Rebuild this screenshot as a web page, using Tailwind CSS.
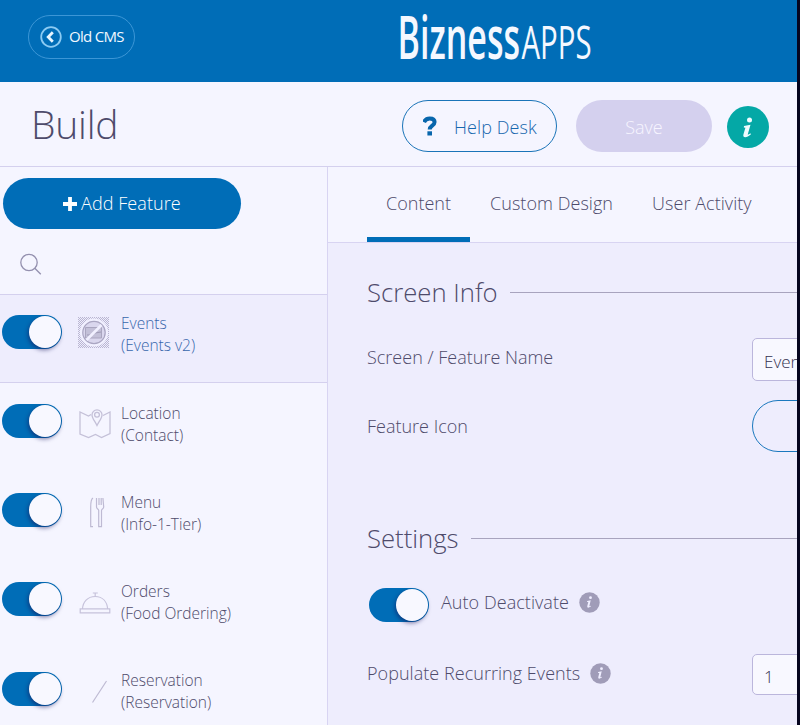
<!DOCTYPE html>
<html lang="en">
<head>
  <meta charset="UTF-8">
  <meta name="viewport" content="width=device-width, initial-scale=1.0">
  <title>Build - Bizness Apps</title>
  <script src="https://cdn.jsdelivr.net/npm/@tailwindcss/browser@4"></script>
</head>
<body class="h-[725px] w-[800px] overflow-hidden bg-[#06051f] font-['Open_Sans',sans-serif] font-light text-[#4e4b6b]">
  <div class="flex h-[725px] w-[797px] flex-col overflow-hidden bg-[#f5f5ff]">
    <header class="flex h-[82px] shrink-0 items-start bg-[#006db7]">
      <button class="mt-[15px] ml-7 flex h-11 w-[107px] items-center rounded-full border border-[#3c96d6] pl-[11px] text-white">
        <svg class="size-[22px] shrink-0" viewBox="0 0 22 22" fill="none">
          <circle cx="11" cy="11" r="9.8" stroke="#8ccbf3" stroke-width="1.8"/>
          <path d="M12.8 6.2 8.2 11l4.6 4.8" stroke="#e6f5ff" stroke-width="2.8"/>
        </svg>
        <span class="ml-[7px] pb-px text-[15px] font-normal tracking-[-0.7px] whitespace-nowrap text-[#f2f8ff]">Old CMS</span>
      </button>
      <svg class="ml-[263px] h-[82px] w-[220px] overflow-visible" viewBox="0 0 220 82" fill="#f4f8ff">
        <text x="-0.5" y="58.5" font-size="60" font-weight="600" textLength="122.5" lengthAdjust="spacingAndGlyphs">Bizness</text>
        <text x="123.5" y="58.5" font-size="46" font-weight="500" textLength="70" lengthAdjust="spacingAndGlyphs">APPS</text>
      </svg>
    </header>

    <section class="flex h-[85px] shrink-0 items-start border-b border-[#d4d0ee]">
      <h1 class="mt-3 ml-[31px] w-[371px] text-[39px] leading-[60px] tracking-[-0.2px]">Build</h1>
      <button class="mt-[18px] flex h-[52px] w-[155px] items-center rounded-full border-[1.5px] border-[#1a74b8] pl-5 text-[18px] text-[#1767ae]">
        <svg class="h-5 w-[14px]" viewBox="0 0 14 20" fill="none" stroke="#0866ac" stroke-width="4">
          <path d="M1 6.2C2 3.6 4 2.4 6.7 2.4c3 0 4.9 1.3 4.9 3.6 0 3.8-4.9 3.5-4.9 7.5"/>
          <path d="M6.7 15.3v4.2" stroke-width="4.6"/>
        </svg>
        <span class="ml-[17px] pt-0.5 tracking-[0.08px] whitespace-nowrap">Help Desk</span>
      </button>
      <button class="mt-[18px] ml-[19px] h-[52px] w-[136px] rounded-full bg-[#d4d0ee] pt-0.5 text-[18px] text-[#f7f5ff]">Save</button>
      <div class="mt-6 ml-[15px] size-[42px] rounded-full bg-[#04a8a6]">
        <svg class="size-[42px]" viewBox="0 0 42 42" fill="#eefcff">
          <circle cx="22.5" cy="14" r="2.5"/>
          <path d="m17 20.1 6.5-1.4-2.7 9.5c-.2.8.4.7 2.5-.9l.7.9c-2.3 2.1-4.1 3-5.8 3-1.6 0-2.2-1-1.8-2.6l2-6.9-1.6-.3z"/>
        </svg>
      </div>
    </section>

    <div class="flex min-h-0 flex-1">
      <aside class="w-[328px] shrink-0 border-r border-[#d8d4f2]">
        <button class="mt-[11px] ml-[3px] flex h-[51px] w-[238px] items-center rounded-full bg-[#006db7] pl-[60px] text-[18px] text-white">
          <svg class="size-[14px]" viewBox="0 0 14 14"><path d="M7 0v14M0 7h14" stroke="#fff" stroke-width="3.8"/></svg>
          <span class="ml-1 tracking-[0.08px]">Add Feature</span>
        </button>
        <div class="h-[65px] pt-6 pl-5">
          <svg class="size-[22px]" viewBox="0 0 22 22" fill="none" stroke="#9490af" stroke-width="1.3">
            <circle cx="9" cy="9.5" r="8.2"/>
            <path d="m14.8 15.3 6 6"/>
          </svg>
        </div>

        <ul class="text-[15.5px] leading-[22px]">
          <li class="flex h-[89px] items-start border-y border-[#d4d0ee] bg-[#eeedfd] text-[#3766ac]">
            <div class="mt-5 ml-[2px] flex h-[34px] w-[60px] justify-end rounded-full bg-[#006db7] p-px">
              <span class="size-8 rounded-full bg-[#f8f8ff] shadow-[-1px_2px_4px_rgba(20,20,90,0.55)]"></span>
            </div>
            <svg class="mt-[22px] ml-4 size-[31px]" viewBox="0 0 31 31" fill="none">
              <defs>
                <pattern id="checks" width="2" height="2" patternUnits="userSpaceOnUse">
                  <path d="M0 0h1v1H0zM1 1h1v1H1z" fill="#bab6d2"/>
                </pattern>
              </defs>
              <path d="M0 0h31v31H0z" fill="url(#checks)"/>
              <circle cx="16" cy="15.5" r="12.8" fill="#dad7ee" stroke="#f1f0ff" stroke-width="2.5"/>
              <circle cx="16" cy="15.5" r="11.2" stroke="#aaa6c2" stroke-width="1.2"/>
              <path d="M7.5 10.5h16V21h-16z" fill="#c3c0d8" stroke="#aaa6c0"/>
              <path d="M9 18h5l3-2 6-1" stroke="#9d99b5"/>
              <path d="M8.5 23 23.5 8" stroke="#f1f0ff" stroke-width="2.6"/>
            </svg>
            <div class="mt-[17px] ml-3">Events<br>(Events v2)</div>
          </li>
          <li class="flex h-[89px] items-start">
            <div class="mt-[21px] ml-[2px] flex h-[34px] w-[60px] justify-end rounded-full bg-[#006db7] p-px">
              <span class="size-8 rounded-full bg-[#f8f8ff] shadow-[-1px_2px_4px_rgba(20,20,90,0.55)]"></span>
            </div>
            <svg class="mt-6 ml-4 size-[34px]" viewBox="0 0 34 34" fill="none" stroke="#c4c0d8" stroke-width="1.3">
              <path d="M13 7.5 10.5 9 2 5v22l8.5 3.5 7-3 6 3 8.5-4V5l-7 3.5"/>
              <path d="M19 18.5c-2-4.200-5-7.400-5-10.600a5 5 0 0 1 10 0c0 3.200-3 6.400-5 10.600Z"/>
              <circle cx="19" cy="7.8" r="2.4"/>
            </svg>
            <div class="mt-[19px] ml-[9px]">Location<br>(Contact)</div>
          </li>
          <li class="flex h-[89px] items-start">
            <div class="mt-[21px] ml-[2px] flex h-[34px] w-[60px] justify-end rounded-full bg-[#006db7] p-px">
              <span class="size-8 rounded-full bg-[#f8f8ff] shadow-[-1px_2px_4px_rgba(20,20,90,0.55)]"></span>
            </div>
            <svg class="mt-6 ml-4 size-[34px]" viewBox="0 0 34 34" fill="none" stroke="#bebad3" stroke-width="1.2">
              <path d="M15 2c-2.300 1.200-2.300 5-2.300 9v19.700h2.300"/>
              <path d="M18.5 2v9c0 2 2.200 2 2.200 3.500v16.200h2.800V14.500c0-1.500 2.200-1.500 2.200-3.500l-.8-9M21 2v7M23.200 2v7"/>
            </svg>
            <div class="mt-[19px] ml-[9px]">Menu<br>(Info-1-Tier)</div>
          </li>
          <li class="flex h-[90px] items-start">
            <div class="mt-[21px] ml-[2px] flex h-[34px] w-[60px] justify-end rounded-full bg-[#006db7] p-px">
              <span class="size-8 rounded-full bg-[#f8f8ff] shadow-[-1px_2px_4px_rgba(20,20,90,0.55)]"></span>
            </div>
            <svg class="mt-6 ml-4 size-[34px]" viewBox="0 0 34 34" fill="none" stroke="#c6c2db" stroke-width="1.2">
              <path d="M4.5 24C4.8 17 9.5 11.5 17.2 11.5S29 17 29.7 24"/>
              <path d="M2.2 23.8h29.6v4H2.2z"/>
              <path d="M14.8 8h5M17.2 8v3"/>
            </svg>
            <div class="mt-[19px] ml-[9px]">Orders<br>(Food Ordering)</div>
          </li>
          <li class="flex h-[89px] items-start">
            <div class="mt-[21px] ml-[2px] flex h-[34px] w-[60px] justify-end rounded-full bg-[#006db7] p-px">
              <span class="size-8 rounded-full bg-[#f8f8ff] shadow-[-1px_2px_4px_rgba(20,20,90,0.55)]"></span>
            </div>
            <svg class="mt-6 ml-4 size-[34px]" viewBox="0 0 34 34" fill="none" stroke="#bebad3" stroke-width="1.2">
              <path d="M14.5 27.5 28.5 6"/>
            </svg>
            <div class="mt-[18px] ml-[9px]">Reservation<br>(Reservation)</div>
          </li>
        </ul>
      </aside>

      <main class="min-w-0 flex-1 overflow-hidden bg-[#eeedfd]">
        <nav class="flex h-[76px] border-b border-[#d8d4f2] bg-[#f5f5ff] pl-[39px] text-[18px] leading-[72px] whitespace-nowrap">
          <a class="w-[103px] border-b-[5px] border-[#006db7] text-center">Content</a>
          <a class="ml-5 tracking-[0.05px]">Custom Design</a>
          <a class="ml-[39px] tracking-[0.05px]">User Activity</a>
        </nav>

        <div class="pl-[39px]">
          <h2 class="flex h-[98px] items-center text-[25.7px]"><span class="pt-0.5">Screen Info</span><span class="ml-3 h-px flex-1 bg-[#a8a4be]"></span></h2>
          <div class="-mt-[3px] flex h-[42px] items-start text-[18px]">
            <label class="w-[385px] shrink-0 pt-px leading-[36px]">Screen / Feature Name</label>
            <div class="h-[43px] w-[240px] shrink-0 rounded-[5px] border border-[#bbb6dc] bg-[#f8f8ff] pl-[11px] text-[17px] leading-[45px] text-[#34314f]">Events</div>
          </div>
          <div class="mt-5 flex h-[52px] items-center text-[18px]">
            <label class="w-[385px] shrink-0">Feature Icon</label>
            <div class="h-[52px] w-[240px] shrink-0 rounded-full border-[1.5px] border-[#1a78be]"></div>
          </div>

          <h2 class="mt-[59px] flex h-[55px] items-center text-[25.7px]"><span class="pt-px">Settings</span><span class="ml-3 h-px flex-1 bg-[#a8a4be]"></span></h2>
          <div class="mt-[22px] flex h-[34px] items-start text-[18px]">
            <div class="ml-[2px] flex h-[34px] w-[60px] justify-end rounded-full bg-[#006db7] p-px">
              <span class="size-8 rounded-full bg-[#f8f8ff] shadow-[-1px_2px_4px_rgba(20,20,90,0.55)]"></span>
            </div>
            <span class="ml-3 leading-[28px] tracking-[0.05px]">Auto Deactivate</span>
            <svg class="mt-1 ml-[10px] size-[21px]" viewBox="0 0 21 21">
              <circle cx="10.5" cy="10.5" r="10.2" fill="#a09cb8"/>
              <circle cx="11.5" cy="5.7" r="1.4" fill="#efeeff"/>
              <path d="m8.2 9 3.5-.7-1.4 6 1.7-.6-.2.9c-2.4 1.6-3.9 1.3-3.5-.7l1-4H8z" fill="#efeeff"/>
            </svg>
          </div>
          <div class="mt-8 flex h-[41px] items-start text-[18px]">
            <div class="flex w-[385px] shrink-0">
              <span class="leading-[38px] tracking-[0.04px]">Populate Recurring Events</span>
              <svg class="mt-[9px] ml-[10px] size-[21px]" viewBox="0 0 21 21">
                <circle cx="10.5" cy="10.5" r="10.2" fill="#a09cb8"/>
                <circle cx="11.5" cy="5.7" r="1.4" fill="#efeeff"/>
                <path d="m8.2 9 3.5-.7-1.4 6 1.7-.6-.2.9c-2.4 1.6-3.9 1.3-3.5-.7l1-4H8z" fill="#efeeff"/>
              </svg>
            </div>
            <div class="h-[41px] w-[240px] shrink-0 rounded-[5px] border border-[#bbb6dc] bg-[#f8f8ff] pl-[11px] text-[17px] leading-[43px] text-[#34314f]">1</div>
          </div>
        </div>
      </main>
    </div>
  </div>
</body>
</html>
